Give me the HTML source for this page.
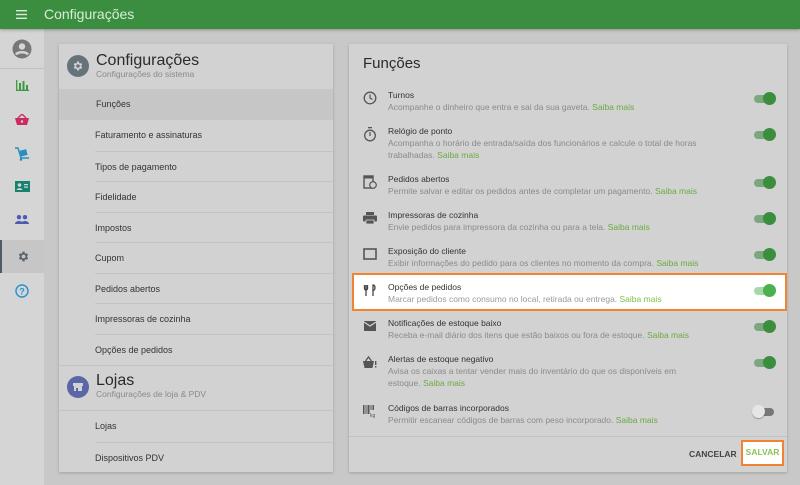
<!DOCTYPE html>
<html><head><meta charset="utf-8"><style>
*{box-sizing:border-box;margin:0;padding:0}
body{width:800px;height:485px;overflow:hidden;background:#c8c8c8;font-family:"Liberation Sans",sans-serif;position:relative;color:#2a2a2a}
.top{position:absolute;left:0;top:0;width:800px;height:29px;background:#3b8e3f;box-shadow:0 1px 3px rgba(0,0,0,.3);z-index:2}
.top .t{position:absolute;left:44px;top:6px;color:#d8ecd8;font-size:14px}
.side{position:absolute;left:0;top:29px;width:44px;height:456px;background:#d5d5d5}
.si{position:absolute;left:0;width:44px;height:33px;display:flex;align-items:center;justify-content:center}
.card{position:absolute;background:#d2d2d2;box-shadow:0 1px 3px rgba(0,0,0,.2)}
.row{position:absolute;left:36px;right:0;height:31px;border-top:1px solid #c3c3c3;font-size:9px;line-height:30px;color:#333}
.f{position:absolute;left:0;right:0;}
.f .ic{position:absolute;left:14px;top:2px}
.f .h{position:absolute;left:39px;top:1px;font-size:8.5px;color:#333}
.f .d{position:absolute;left:39px;top:12px;font-size:8.5px;color:#8a8a8a;line-height:12px;width:300px}
.d b{font-weight:normal;color:#6aaa3f}
.tg{position:absolute;right:11px;width:24px;height:10px}
.tg i{position:absolute;left:2px;top:1px;width:20px;height:8px;border-radius:4px;background:#7ca77e}
.tg u{position:absolute;right:0;top:-2px;width:13px;height:13px;border-radius:50%;background:#3a8e3e}
</style></head><body>
<div class="top">
<svg style="position:absolute;left:16px;top:10px" width="11" height="9"><rect y="0" width="11" height="1.4" fill="#d8ecd8"/><rect y="3.8" width="11" height="1.4" fill="#d8ecd8"/><rect y="7.6" width="11" height="1.4" fill="#d8ecd8"/></svg>
<div class="t">Configurações</div></div>
<div class="side">
<div class="si" style="top:2px;height:36px"><svg width="20" height="20"><circle cx="10" cy="10" r="9.5" fill="#777"/><circle cx="10" cy="7.5" r="3.2" fill="#d5d5d5"/><path d="M4 15.5c2-3 10-3 12 0" stroke="#d5d5d5" stroke-width="2.6" fill="none"/></svg></div>
<div style="position:absolute;left:0;top:39px;width:44px;height:1px;background:#c0c0c0"></div>
<div class="si" style="top:40px"><svg width="13" height="11"><rect x="0" y="0" width="1.3" height="11" fill="#3d9a3f"/><rect x="0" y="9.7" width="13" height="1.3" fill="#3d9a3f"/><rect x="3" y="3" width="2" height="7" fill="#3d9a3f"/><rect x="6.5" y="1" width="2" height="9" fill="#3d9a3f"/><rect x="10" y="5" width="2" height="5" fill="#3d9a3f"/></svg></div>
<div class="si" style="top:74px"><svg width="14" height="11"><path d="M0 4h14l-2 7H2z" fill="#cc2a62"/><path d="M3 4l4-4 4 4" stroke="#cc2a62" stroke-width="1.3" fill="none"/><circle cx="7" cy="7.5" r="1.2" fill="#d5d5d5"/></svg></div>
<div class="si" style="top:108px"><svg width="14" height="14"><path d="M0 1h3l3 10h8" stroke="#2a8fbf" stroke-width="1.4" fill="none"/><rect x="5" y="3" width="7" height="6" fill="#2a8fbf" transform="rotate(-15 8 6)"/><circle cx="6" cy="12.5" r="1.3" fill="#2a8fbf"/></svg></div>
<div class="si" style="top:141px"><svg width="15" height="11"><rect width="15" height="11" fill="#17836e"/><circle cx="4.5" cy="4" r="1.8" fill="#d5d5d5"/><path d="M1.5 9c1-2.5 5-2.5 6 0z" fill="#d5d5d5"/><rect x="9" y="3" width="4" height="1.2" fill="#d5d5d5"/><rect x="9" y="5.5" width="4" height="1.2" fill="#d5d5d5"/></svg></div>
<div class="si" style="top:174px"><svg width="14" height="9"><circle cx="4" cy="2.2" r="2.2" fill="#4c5bb0"/><circle cx="10" cy="2.2" r="2.2" fill="#4c5bb0"/><path d="M0 9c0-4 8-4 8 0zM6 9c0-4 8-4 8 0z" fill="#4c5bb0"/></svg></div>
<div class="si" style="top:211px;background:#c6c6c6;border-left:2px solid #4e5a66"><svg width="13" height="13" viewBox="0 0 24 24"><path fill="#59636b" d="M19.4 13a7.5 7.5 0 0 0 0-2l2.1-1.6-2-3.5-2.5 1a7 7 0 0 0-1.7-1L15 3h-4l-.4 2.9a7 7 0 0 0-1.7 1l-2.5-1-2 3.5L6.6 11a7.5 7.5 0 0 0 0 2l-2.1 1.6 2 3.5 2.5-1a7 7 0 0 0 1.7 1L11 21h4l.4-2.9a7 7 0 0 0 1.7-1l2.5 1 2-3.5zM13 15.5a3.5 3.5 0 1 1 0-7 3.5 3.5 0 0 1 0 7z" transform="translate(-1 0)"/></svg></div>
<div class="si" style="top:245px"><svg width="14" height="14"><circle cx="7" cy="7" r="6" stroke="#2a8fd0" stroke-width="1.4" fill="none"/><text x="7" y="10.5" font-size="9" text-anchor="middle" fill="#2a8fd0" font-family="Liberation Sans" font-weight="bold">?</text></svg></div>
</div>

<div class="card" style="left:59px;top:44px;width:274px;height:428px">
<svg style="position:absolute;left:8px;top:11px" width="22" height="22" viewBox="0 0 22 22"><circle cx="11" cy="11" r="11" fill="#66737b"/><g transform="translate(5 5) scale(.5)"><path fill="#d2d2d2" d="M19.4 13a7.5 7.5 0 0 0 0-2l2.1-1.6-2-3.5-2.5 1a7 7 0 0 0-1.7-1L15 3h-4l-.4 2.9a7 7 0 0 0-1.7 1l-2.5-1-2 3.5L6.6 11a7.5 7.5 0 0 0 0 2l-2.1 1.6 2 3.5 2.5-1a7 7 0 0 0 1.7 1L11 21h4l.4-2.9a7 7 0 0 0 1.7-1l2.5 1 2-3.5zM13 15.5a3.5 3.5 0 1 1 0-7 3.5 3.5 0 0 1 0 7z" transform="translate(-1 0)"/></g></svg>
<div style="position:absolute;left:37px;top:8px;font-size:16px;color:#2a2a2a">Configurações</div>
<div style="position:absolute;left:37px;top:25px;font-size:8.5px;color:#8a8a8a">Configurações do sistema</div>
<div class="row" style="left:0;top:45px;padding-left:37px;background:#c6c6c6;border:0">Funções</div>
<div class="row" style="top:76px;border:0">Faturamento e assinaturas</div>
<div class="row" style="top:107px">Tipos de pagamento</div>
<div class="row" style="top:137px">Fidelidade</div>
<div class="row" style="top:168px">Impostos</div>
<div class="row" style="top:198px">Cupom</div>
<div class="row" style="top:229px">Pedidos abertos</div>
<div class="row" style="top:259px">Impressoras de cozinha</div>
<div class="row" style="top:290px">Opções de pedidos</div>
<div style="position:absolute;left:0;right:0;top:321px;height:1px;background:#c3c3c3"></div>
<svg style="position:absolute;left:8px;top:332px" width="22" height="22"><circle cx="11" cy="11" r="11" fill="#5a66a8"/><rect x="6" y="7" width="10" height="3" fill="#d2d2d2"/><rect x="7" y="10" width="8" height="5" fill="#d2d2d2"/><rect x="9" y="12" width="2" height="3" fill="#5a66a8"/></svg>
<div style="position:absolute;left:37px;top:328px;font-size:16px;color:#2a2a2a">Lojas</div>
<div style="position:absolute;left:37px;top:345px;font-size:8.5px;color:#8a8a8a">Configurações de loja &amp; PDV</div>
<div style="position:absolute;left:0;right:0;top:366px;height:1px;background:#c3c3c3"></div>
<div class="row" style="top:367px;border:0">Lojas</div>
<div class="row" style="top:398px">Dispositivos PDV</div>
</div>

<div class="card" style="left:349px;top:44px;width:438px;height:428px">
<div style="position:absolute;left:14px;top:11px;font-size:15px;color:#2a2a2a">Funções</div>

<div class="f" style="top:45px"><svg class="ic" width="14" height="14"><circle cx="7" cy="7" r="5.8" stroke="#555" stroke-width="1.3" fill="none"/><path d="M7 3.5V7l2.5 1.5" stroke="#555" stroke-width="1.2" fill="none"/></svg><div class="h">Turnos</div><div class="d">Acompanhe o dinheiro que entra e sai da sua gaveta. <b>Saiba mais</b></div><div class="tg" style="top:5px"><i></i><u></u></div></div>

<div class="f" style="top:81px"><svg class="ic" width="14" height="15"><rect x="5" y="0" width="4" height="1.3" fill="#555"/><circle cx="7" cy="8.5" r="5.3" stroke="#555" stroke-width="1.3" fill="none"/><path d="M7 5v4" stroke="#555" stroke-width="1.2"/></svg><div class="h">Relógio de ponto</div><div class="d" style="width:325px">Acompanha o horário de entrada/saída dos funcionários e calcule o total de horas trabalhadas. <b>Saiba mais</b></div><div class="tg" style="top:5px"><i></i><u></u></div></div>

<div class="f" style="top:129px"><svg class="ic" width="14" height="14"><rect x="1" y="1" width="9" height="12" fill="none" stroke="#555" stroke-width="1.4"/><rect x="1" y="1" width="9" height="2.5" fill="#555"/><circle cx="10" cy="10" r="3.3" fill="#d2d2d2" stroke="#555" stroke-width="1.2"/></svg><div class="h">Pedidos abertos</div><div class="d" style="width:400px">Permite salvar e editar os pedidos antes de completar um pagamento. <b>Saiba mais</b></div><div class="tg" style="top:5px"><i></i><u></u></div></div>

<div class="f" style="top:165px"><svg class="ic" width="14" height="14"><rect x="3" y="1" width="8" height="3" fill="#555"/><rect x="0" y="4.5" width="14" height="6" rx="1" fill="#555"/><rect x="3" y="9" width="8" height="4" fill="#555" stroke="#d2d2d2" stroke-width=".8"/></svg><div class="h">Impressoras de cozinha</div><div class="d" style="width:400px">Envie pedidos para impressora da cozinha ou para a tela. <b>Saiba mais</b></div><div class="tg" style="top:5px"><i></i><u></u></div></div>

<div class="f" style="top:201px"><svg class="ic" width="14" height="14"><rect x="1" y="2" width="12" height="10" fill="none" stroke="#555" stroke-width="1.6"/></svg><div class="h">Exposição do cliente</div><div class="d" style="width:400px">Exibir informações do pedido para os clientes no momento da compra. <b>Saiba mais</b></div><div class="tg" style="top:5px"><i></i><u></u></div></div>

<div style="position:absolute;left:3px;top:229px;width:435px;height:38px;background:#fff;border:2.5px solid #f08433"></div>
<div class="f" style="top:237px"><svg class="ic" width="14" height="14"><path d="M3 2v11M1.5 2v3.5a1.5 1.5 0 0 0 3 0V2M10 13V2c1.5 0 2 1.5 2 3s-1 2.5-2 2.5" stroke="#444" stroke-width="1.3" fill="none"/></svg><div class="h">Opções de pedidos</div><div class="d" style="width:400px;color:#9a9a9a">Marcar pedidos como consumo no local, retirada ou entrega. <b style="color:#7cc14a">Saiba mais</b></div><div class="tg" style="top:5px"><i style="background:#a7d8a9"></i><u style="background:#4caf50"></u></div></div>

<div class="f" style="top:273px"><svg class="ic" width="14" height="14"><rect x="1" y="2" width="12" height="10" fill="#555"/><path d="M1 3l6 4 6-4" stroke="#d2d2d2" stroke-width="1.2" fill="none"/></svg><div class="h">Notificações de estoque baixo</div><div class="d" style="width:400px">Receba e-mail diário dos itens que estão baixos ou fora de estoque. <b>Saiba mais</b></div><div class="tg" style="top:5px"><i></i><u></u></div></div>

<div class="f" style="top:309px"><svg class="ic" width="14" height="14"><path d="M0 6h11l-1.5 7h-8z" fill="#555"/><path d="M2.5 6l3-4 3 4" stroke="#555" stroke-width="1.3" fill="none"/><rect x="12" y="6" width="1.4" height="4" fill="#555"/><rect x="12" y="11" width="1.4" height="1.5" fill="#555"/></svg><div class="h">Alertas de estoque negativo</div><div class="d">Avisa os caixas a tentar vender mais do inventário do que os disponíveis em estoque. <b>Saiba mais</b></div><div class="tg" style="top:5px"><i></i><u></u></div></div>

<div class="f" style="top:358px"><svg class="ic" width="14" height="14"><rect x="0" y="1" width="1.5" height="9" fill="#555"/><rect x="2.5" y="1" width="1" height="9" fill="#555"/><rect x="4.5" y="1" width="2" height="9" fill="#555"/><rect x="7.5" y="1" width="1" height="5" fill="#555"/><rect x="9.5" y="1" width="1.5" height="5" fill="#555"/><text x="7" y="13" font-size="5" fill="#555" font-family="Liberation Sans">kg</text></svg><div class="h">Códigos de barras incorporados</div><div class="d" style="width:400px">Permitir escanear códigos de barras com peso incorporado. <b>Saiba mais</b></div><div class="tg" style="top:5px"><i style="background:#777"></i><u style="left:0;background:#e6e6e6;box-shadow:0 1px 1px rgba(0,0,0,.3)"></u></div></div>

<div style="position:absolute;left:0;right:0;top:392px;height:1px;background:#c3c3c3"></div>
<div style="position:absolute;left:340px;top:405px;font-size:8.5px;font-weight:bold;color:#444">CANCELAR</div>
<div style="position:absolute;left:392px;top:396px;width:43px;height:26px;background:#fff;border:2.5px solid #f08433;font-size:8.5px;font-weight:bold;color:#8cc453;text-align:center;line-height:21px">SALVAR</div>
</div>
</body></html>
